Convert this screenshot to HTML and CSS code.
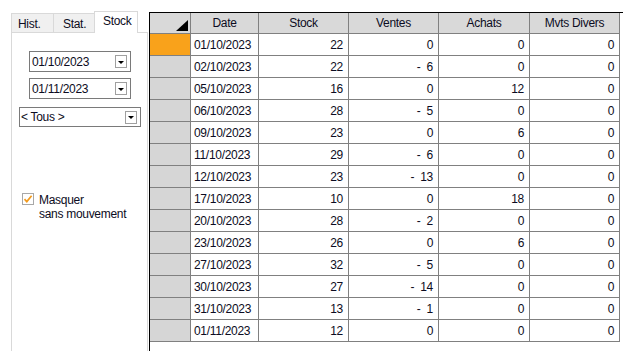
FILE: index.html
```html
<!DOCTYPE html>
<html lang="fr">
<head>
<meta charset="utf-8">
<title>Stock</title>
<link rel="stylesheet" href="styles.css">
</head>
<body>
<div class="app">
  <div class="side">
    <div class="tabs">
      <div class="tab">Hist.</div>
      <div class="tab">Stat.</div>
      <div class="tab active">Stock</div>
    </div>
    <div class="panel">
      <div class="combo date1">
        <span class="combo-text">01/10/2023</span>
        <span class="combo-btn"><svg width="6" height="3" viewBox="0 0 6 3"><path d="M0 0H6L3 3Z" fill="#000"/></svg></span>
      </div>
      <div class="combo date2">
        <span class="combo-text">01/11/2023</span>
        <span class="combo-btn"><svg width="6" height="3" viewBox="0 0 6 3"><path d="M0 0H6L3 3Z" fill="#000"/></svg></span>
      </div>
      <div class="combo all">
        <span class="combo-text">&lt; Tous &gt;</span>
        <span class="combo-btn"><svg width="6" height="3" viewBox="0 0 6 3"><path d="M0 0H6L3 3Z" fill="#000"/></svg></span>
      </div>
      <div class="check">
        <span class="box"><svg width="10" height="10" viewBox="0 0 10 10"><path d="M1.5 5.2 L3.8 7.6 L8.6 1.8" fill="none" stroke="#f29b1f" stroke-width="1.7"/></svg></span>
        <span class="check-label">Masquer<br>sans mouvement</span>
      </div>
    </div>
  </div>
  <div class="grid-wrap">
    <div class="grid">
      <div class="hc corner"><svg width="12" height="11" viewBox="0 0 12 11"><path d="M12 0V11H0Z" fill="#000"/></svg></div>
      <div class="hc">Date</div>
      <div class="hc">Stock</div>
      <div class="hc">Ventes</div>
      <div class="hc">Achats</div>
      <div class="hc">Mvts Divers</div>

      <div class="rh sel"></div><div class="c d">01/10/2023</div><div class="c n">22</div><div class="c n">0</div><div class="c n">0</div><div class="c n">0</div>
      <div class="rh"></div><div class="c d">02/10/2023</div><div class="c n">22</div><div class="c n">-  6</div><div class="c n">0</div><div class="c n">0</div>
      <div class="rh"></div><div class="c d">05/10/2023</div><div class="c n">16</div><div class="c n">0</div><div class="c n">12</div><div class="c n">0</div>
      <div class="rh"></div><div class="c d">06/10/2023</div><div class="c n">28</div><div class="c n">-  5</div><div class="c n">0</div><div class="c n">0</div>
      <div class="rh"></div><div class="c d">09/10/2023</div><div class="c n">23</div><div class="c n">0</div><div class="c n">6</div><div class="c n">0</div>
      <div class="rh"></div><div class="c d">11/10/2023</div><div class="c n">29</div><div class="c n">-  6</div><div class="c n">0</div><div class="c n">0</div>
      <div class="rh"></div><div class="c d">12/10/2023</div><div class="c n">23</div><div class="c n">-  13</div><div class="c n">0</div><div class="c n">0</div>
      <div class="rh"></div><div class="c d">17/10/2023</div><div class="c n">10</div><div class="c n">0</div><div class="c n">18</div><div class="c n">0</div>
      <div class="rh"></div><div class="c d">20/10/2023</div><div class="c n">28</div><div class="c n">-  2</div><div class="c n">0</div><div class="c n">0</div>
      <div class="rh"></div><div class="c d">23/10/2023</div><div class="c n">26</div><div class="c n">0</div><div class="c n">6</div><div class="c n">0</div>
      <div class="rh"></div><div class="c d">27/10/2023</div><div class="c n">32</div><div class="c n">-  5</div><div class="c n">0</div><div class="c n">0</div>
      <div class="rh"></div><div class="c d">30/10/2023</div><div class="c n">27</div><div class="c n">-  14</div><div class="c n">0</div><div class="c n">0</div>
      <div class="rh"></div><div class="c d">31/10/2023</div><div class="c n">13</div><div class="c n">-  1</div><div class="c n">0</div><div class="c n">0</div>
      <div class="rh"></div><div class="c d">01/11/2023</div><div class="c n">12</div><div class="c n">0</div><div class="c n">0</div><div class="c n">0</div>
    </div>
  </div>
</div>
</body>
</html>
```
FILE: styles.css
```css
* { box-sizing: border-box; }
html, body { margin: 0; padding: 0; background: #fff; }
body {
  font-family: "Liberation Sans", Arial, sans-serif;
  font-size: 12px;
  letter-spacing: -0.3px;
  color: #0c0c22;
}
.app {
  display: flex;
  width: 626px;
  height: 351px;
  overflow: hidden;
}
.side {
  width: 149px;
  flex: none;
  padding: 11px 0 0 11px;
  display: flex;
  flex-direction: column;
  overflow: hidden;
}
.tabs {
  display: flex;
  align-items: flex-end;
  height: 21px;
  flex: none;
}
.tab {
  height: 19px;
  width: 43px;
  border: 1px solid #d9d9d9;
  border-bottom: none;
  background: #f0f0f0;
  padding: 3px 0 0 6px;
  line-height: 14px;
}
.tab + .tab { margin-left: -1px; }
.tab:nth-child(2) { width: 42px; padding-left: 9px; }
.tab.active {
  width: 44px;
  height: 22px;
  margin-bottom: -1px;
  background: #fff;
  position: relative;
  z-index: 1;
  padding: 2px 0 0 8px;
}
.panel {
  width: 137px;
  height: 340px;
  flex: none;
  border: 1px solid #d9d9d9;
  padding-top: 18px;
  display: flex;
  flex-direction: column;
  align-items: flex-start;
}
.combo {
  height: 21px;
  border: 1px solid #7a7a7a;
  background: #fff;
  display: flex;
  align-items: center;
  justify-content: space-between;
  padding: 0 3px 0 2px;
}
.date1 { width: 102px; margin-left: 17px; }
.date2 { width: 102px; margin-left: 17px; margin-top: 6px; }
.all { width: 122px; margin-left: 7px; margin-top: 8px; height: 20px; padding-left: 1px; }
.combo-text { line-height: 14px; }
.combo-btn {
  width: 12px;
  height: 13px;
  border: 1px solid #a0a0a0;
  display: flex;
  align-items: center;
  justify-content: center;
  padding-top: 1px;
}
.check {
  margin-top: 66px;
  margin-left: 10px;
  display: flex;
  align-items: flex-start;
}
.box {
  width: 12px;
  height: 12px;
  border: 1px solid #a8a8a8;
  background: #fff;
  display: flex;
  align-items: center;
  justify-content: center;
}
.check-label {
  margin-left: 5px;
  line-height: 14px;
}
.grid-wrap {
  flex: 1;
  margin-top: 12px;
  margin-right: 3px;
  border-top: 1px solid #000;
  border-left: 1px solid #000;
}
.grid {
  display: grid;
  grid-template-columns: 41px 68px 90px 90px 91px 90px;
  grid-auto-rows: 22px;
  grid-template-rows: 21px;
}
.hc, .rh, .c {
  border-right: 1px solid #808080;
  border-bottom: 1px solid #808080;
  line-height: 14px;
  white-space: pre;
}
.hc {
  background: #d9d9d9;
  display: flex;
  align-items: center;
  justify-content: center;
}
.hc.corner {
  justify-content: flex-end;
  align-items: flex-end;
  padding: 0 2px 2px 0;
}
.rh { background: #d6d6d6; }
.rh.sel { background: #f9a21b; }
.c {
  display: flex;
  align-items: center;
}
.c.d { padding-left: 3px; }
.c.n { justify-content: flex-end; padding-right: 5px; }
```
